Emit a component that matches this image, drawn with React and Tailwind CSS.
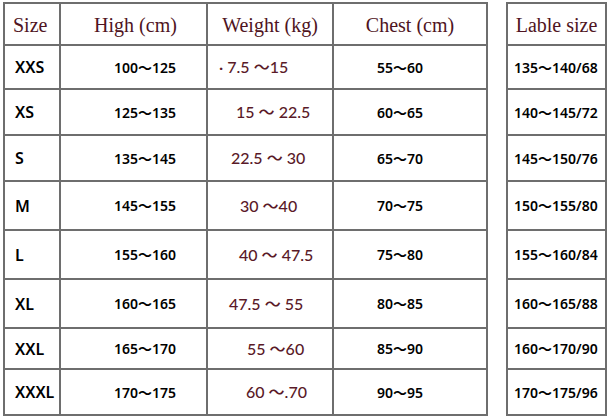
const rows = [
  { size: 'XXS', high: '100～125', weight: '· 7.5 ～15', wpad: 'pl-[11px]', chest: '55～60', label: '135～140/68', h: 'h-[44px]' },
  { size: 'XS', high: '125～135', weight: '15 ～ 22.5', wpad: 'pl-[28px]', chest: '60～65', label: '140～145/72', h: 'h-[46px]' },
  { size: 'S', high: '135～145', weight: '22.5 ～ 30', wpad: 'pl-[23px]', chest: '65～70', label: '145～150/76', h: 'h-[46px]' },
  { size: 'M', high: '145～155', weight: '30 ～40', wpad: 'pl-[32px]', chest: '70～75', label: '150～155/80', h: 'h-[49px]' },
  { size: 'L', high: '155～160', weight: '40 ～ 47.5', wpad: 'pl-[31px]', chest: '75～80', label: '155～160/84', h: 'h-[49px]' },
  { size: 'XL', high: '160～165', weight: '47.5 ～ 55', wpad: 'pl-[21px]', chest: '80～85', label: '160～165/88', h: 'h-[49px]' },
  { size: 'XXL', high: '165～170', weight: '55 ～60', wpad: 'pl-[39px]', chest: '85～90', label: '160～170/90', h: 'h-[41px]' },
  { size: 'XXXL', high: '170～175', weight: '60 ～.70', wpad: 'pl-[38px]', chest: '90～95', label: '170～175/96', h: 'h-[46px]' },
];

const head = "font-['Liberation_Serif',serif] text-[20px] text-[#4f1422]";
const body = "font-['Noto_Sans','Noto_Sans_CJK_SC',sans-serif] text-[14px] font-semibold text-black";
const sz = "font-['Noto_Sans',sans-serif] text-[16px] font-semibold text-black";
const wt = "font-['Lato','Noto_Sans_CJK_SC',sans-serif] text-[16px] font-medium text-[#5a1a28]";
const line = 'border-[#6e6e6e]';

export default function App() {
  return (
    <div className="w-[607px] h-[420px] bg-white flex items-start pt-[2px] pl-[3px] overflow-hidden">
      <div className={`w-[485px] border-x-2 border-t-2 ${line}`}>
        <div className={`flex h-[42px] border-b-2 ${line}`}>
          <div className={`w-[56px] border-r-2 ${line} flex items-center pl-[8px] pt-[2px] ${head}`}>Size</div>
          <div className={`w-[147px] border-r-2 ${line} flex items-center justify-center pl-[4px] pt-[2px] ${head}`}>High (cm)</div>
          <div className={`w-[126px] border-r-2 ${line} flex items-center justify-center pt-[2px] ${head}`}>Weight (kg)</div>
          <div className={`flex-1 flex items-center justify-center pt-[2px] ${head}`}>Chest (cm)</div>
        </div>
        {rows.map((r) => (
          <div key={r.size} className={`flex ${r.h} border-b-2 ${line}`}>
            <div className={`w-[56px] border-r-2 ${line} flex items-center pl-[10px] ${sz}`}>{r.size}</div>
            <div className={`w-[147px] border-r-2 ${line} flex items-center pl-[53px] ${body}`}>{r.high}</div>
            <div className={`w-[126px] border-r-2 ${line} flex items-center ${r.wpad} whitespace-pre ${wt}`}>{r.weight}</div>
            <div className={`flex-1 flex items-center pl-[43px] ${body}`}>{r.chest}</div>
          </div>
        ))}
      </div>
      <div className={`ml-[18px] w-[101px] border-x-2 border-t-2 ${line}`}>
        <div className={`flex h-[42px] border-b-2 ${line} items-center justify-center pt-[2px] ${head}`}>Lable size</div>
        {rows.map((r) => (
          <div key={r.size} className={`flex ${r.h} border-b-2 ${line} items-center pl-[6px] ${body}`}>{r.label}</div>
        ))}
      </div>
    </div>
  );
}
